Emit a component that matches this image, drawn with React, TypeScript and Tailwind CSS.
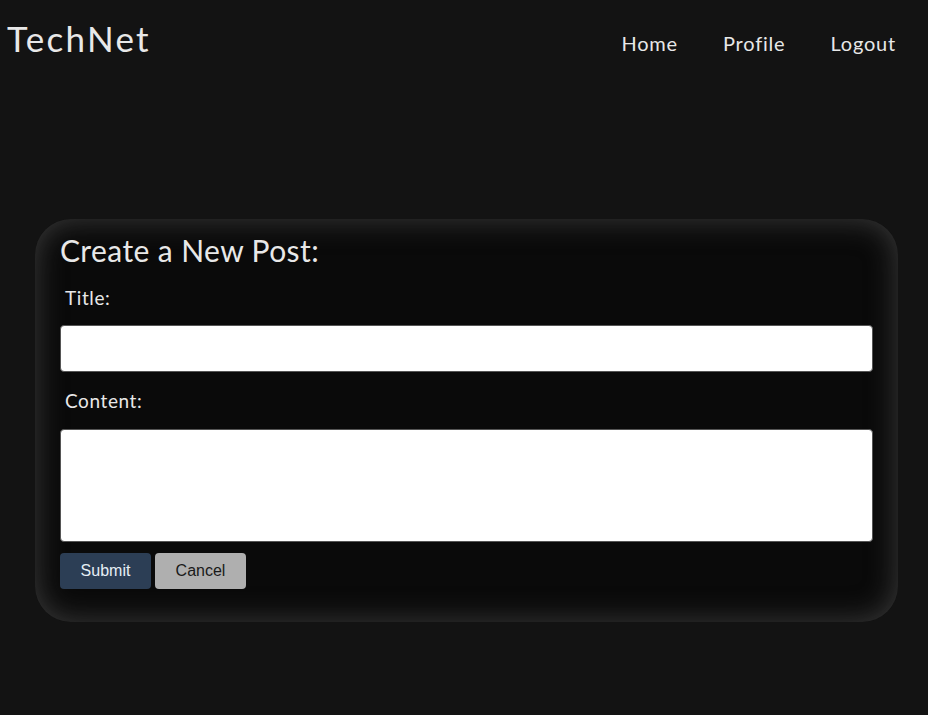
export default function App() {
  return (
    <div className="min-h-screen bg-[#131313] font-['Lato',sans-serif] text-[#e8e8e8]">
      <header className="flex items-center justify-between h-[80px] pl-[7px] pr-[32px]">
        <span className="text-[35px] leading-none -mt-[4px] tracking-[2.3px]">TechNet</span>
        <nav className="flex gap-[45px] text-[20px] mt-[6px] tracking-[0.8px]">
          <a href="#">Home</a>
          <a href="#">Profile</a>
          <a href="#">Logout</a>
        </nav>
      </header>

      <main className="pl-[35px] pr-[30px] pt-[139px] pb-[94px]">
        <div className="rounded-[36px] bg-[#0a0a0a] shadow-[inset_0_0_30px_#3c3c3c] px-[25px] pt-[13px] pb-[33px]">
          <h2 className="text-[30px] leading-[36px] tracking-[0.4px]">Create a New Post:</h2>
          <form className="flex flex-col">
            <label className="text-[19px] leading-[24px] ml-[5px] mt-[18px] mb-[15px] tracking-[0.6px]">Title:</label>
            <input className="h-[47px] bg-white rounded-[4px] border border-[#555] text-black px-2" />
            <label className="text-[19px] leading-[24px] ml-[5px] mt-[17px] mb-[16px] tracking-[0.6px]">Content:</label>
            <textarea className="h-[113px] bg-white rounded-[4px] border border-[#555] text-black px-2 resize-none" />
            <div className="flex gap-[4px] mt-[11px] font-['Liberation_Sans',sans-serif] text-[16px]">
              <button type="button" className="w-[91px] h-[36px] rounded-[4px] bg-[#2c3e55] text-[#e6eef5]">Submit</button>
              <button type="button" className="w-[91px] h-[36px] rounded-[4px] bg-[#afafaf] text-[#1a1a1a]">Cancel</button>
            </div>
          </form>
        </div>
      </main>
    </div>
  );
}
